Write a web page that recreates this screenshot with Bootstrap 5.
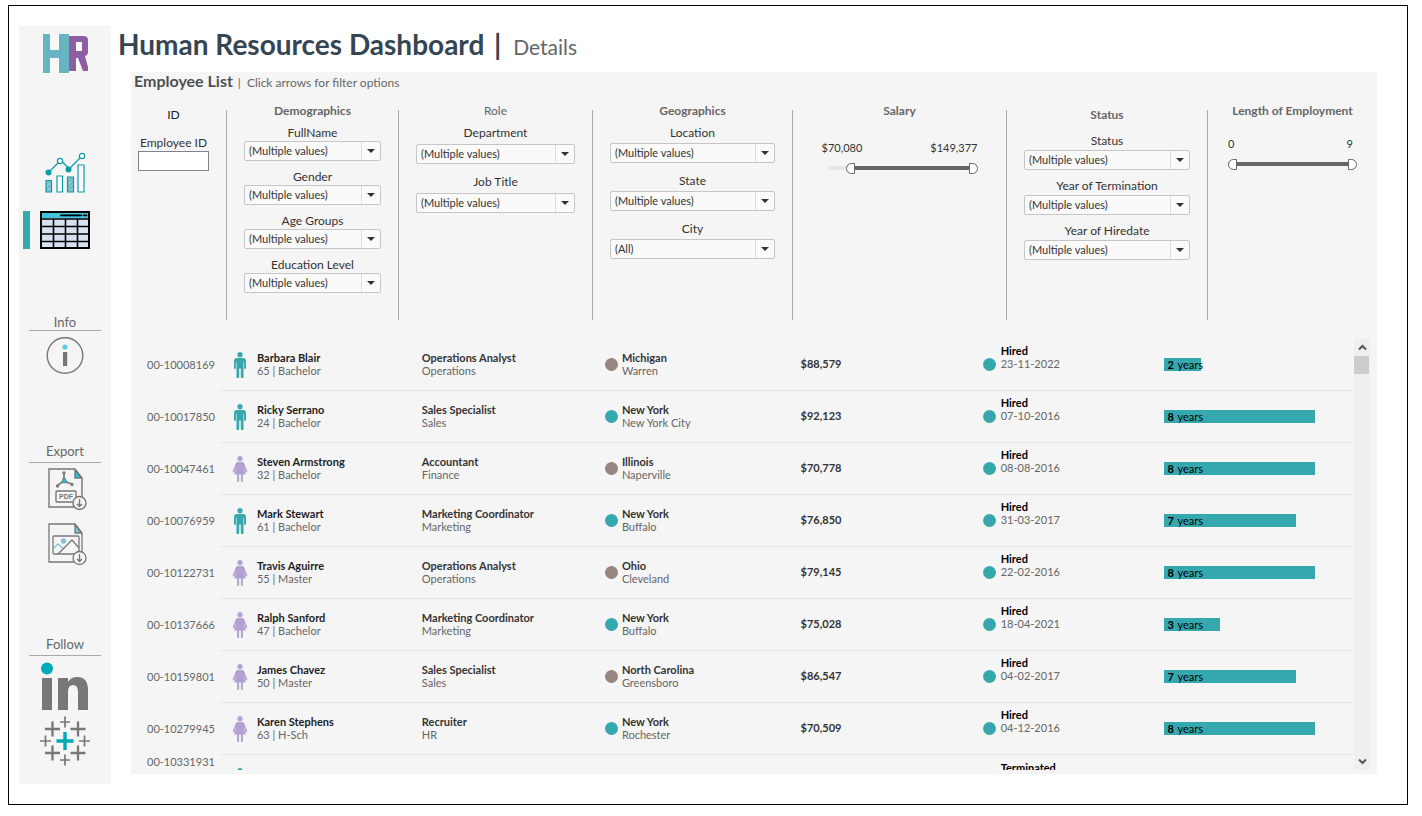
<!DOCTYPE html>
<html lang="en">
<head>
<meta charset="utf-8">
<meta name="viewport" content="width=device-width, initial-scale=1">
<title>Human Resources Dashboard | Details</title>
<link href="https://cdn.jsdelivr.net/npm/bootstrap@5.3.0/dist/css/bootstrap.min.css" rel="stylesheet">
<style>
:root{--teal:#35a8ae;--ink:#333;--mid:#666;--panel:#f5f5f5}
body{height:100vh;padding:5px 14px 11px 8px;font-family:"Trebuchet MS",Lato,"Open Sans",sans-serif;font-size:11px;line-height:13px;color:var(--ink)}
a{color:inherit;text-decoration:none}
.frame{border:1px solid #000;min-height:640px}
/* sidebar */
.side{width:92px;margin:20px 0 20px 10px;background:var(--panel);flex:none}
.side h2{font-size:13px;line-height:16px;font-weight:400;color:var(--mid);text-align:center;margin:0 10px;border-bottom:1px solid #aaa}
.side svg{display:block}
.brand{margin:7px 0 77px 22px}
.current{border-left:7px solid var(--teal);margin:17px 0 65px 4px;padding-left:10px}
.sec-info{height:129px}
.sec-info a{padding-top:6px}
.sec-export{height:193px}
.sec-export a{padding:4px 0 0 3px}
.sec-export a + a{padding-top:11px}
.sec-export h2,.sec-follow h2{padding-bottom:3px}
.sec-follow a{padding-top:5px}
/* heading */
.head-line{padding-top:20px;margin-bottom:10px}
.head-line h1{font-size:28px;line-height:36px;font-weight:700;color:#354552;margin:0}
.head-line span{font-size:21px;line-height:20px;font-weight:400;color:var(--mid)}
.head-line i{font-style:normal;line-height:20px;padding:0 5px 0 3px}
.board{background:var(--panel);margin:0 30px 30px 13px;min-height:0}
.list-title{font-size:16px;line-height:18px;font-weight:700;color:#4f4f4f;margin:0 0 12px;padding-left:3px}
.list-title small{font-size:12px;line-height:12px;font-weight:400;color:var(--mid)}
.list-title small i{font-style:normal;padding:0 3px 0 1px}
/* filters */
.filters{display:grid;grid-template-columns:95fr 172fr 194fr 200fr 214fr 201fr 170fr;margin-bottom:19px}
.fcol{min-height:218px;min-width:0;padding:0 17px 0 18px;display:flex;flex-direction:column;background:linear-gradient(#aaa,#aaa) 0 8px/1px 100% no-repeat}
.fcol:first-child{background:none;padding-left:7px}
.fcol h3{font-size:12px;line-height:18px;font-weight:700;color:var(--mid);text-align:center;margin:0 0 5px}
.fcol h3.plain{font-weight:400}
.fcol.low h3{padding-top:4px;margin-bottom:9px}
.fcol.low:first-child h3{margin-bottom:11px}
.fcol label{font-size:12px;line-height:16px;text-align:center;display:block}
.fcol .form-select{height:20px;padding:0 20px 0 4px;font-size:11px;line-height:16px;color:var(--ink);border:1px solid #c6c6c6;border-radius:2px;background-color:#fafafa;background-size:19px 18px;background-position:right 0 center;background-image:url("data:image/svg+xml,%3Csvg xmlns='http://www.w3.org/2000/svg' viewBox='0 0 19 18'%3E%3Cpath d='M.5 0v18' stroke='%23ddd'/%3E%3Cpath d='M6 7h8l-4 4z' fill='%23333'/%3E%3C/svg%3E");margin:var(--lab,0px) 0 var(--gap,8px)}
.fcol .form-control{height:20px;padding:0 4px;font-size:11px;border:1px solid #80838f;border-radius:0;background:#fff}
.role{--lab:3px;--gap:10px}.geo{--lab:2px;--gap:10px}.stat{--lab:1px;--gap:8px}
.span{width:156px;margin:15px auto 0}
.span label{font-size:11px}
.span.short{width:129px;margin-top:11px}
.slide{position:relative;height:13px;margin-top:6px}
.rail{height:4px;background:#e6e6e6}
.rail div{height:4px;background:var(--mid)}
.salary .slide{margin-left:7px}
.slide .rail{position:absolute;left:0;right:4px;top:4px}
.slide input{position:absolute;left:0;top:0;width:100%;height:13px;margin:0;appearance:none;background:none;pointer-events:none}
.slide input::-webkit-slider-thumb{appearance:none;pointer-events:auto;width:9px;height:11px;border:1px solid var(--mid);background:#fff;border-radius:0 6px 6px 0}
.slide input.from::-webkit-slider-thumb{border-radius:6px 0 0 6px}
/* list */
.list-box{min-height:0;padding:0 7px 4px 0}
.list-view{overflow:hidden;min-width:0}
.people{table-layout:fixed;width:100%;border-collapse:separate;border-spacing:0}
.people td{height:52px;padding:0;border-bottom:1px solid #e6e6e6;vertical-align:middle;white-space:nowrap;color:var(--mid)}
.people td:first-child{border:0;padding:0 0 2px 16px}
.people tr.last td:first-child{vertical-align:top}
.people tr.last td{border:0}
.people strong{display:block;color:var(--ink)}
.people .pair{padding-bottom:2px}
.people .who strong{color:#1e1e1e}
.people .when strong{color:#000}
.people .when .pair{padding-bottom:15px}
.people .figure-icon{width:16px;height:26px;margin:0 9px 0 13px;flex:none}
.spot{width:13px;height:13px;border-radius:50%;background:#978580;margin-right:4px;flex:none}
.spot.on{background:var(--teal)}
.geo-cell .spot{margin-left:1px}
.when .spot{margin-right:5px}
.years{height:13px;padding-left:4px;background:var(--teal);color:#000;line-height:13px}
.years b{margin-right:1px}
.bar-track{width:80%}
.scroller{width:16px;margin-left:1px;background:#efefef;flex:none}
.scroller button{border:0;background:none;padding:0;height:17px;line-height:0}
.scroller i{height:18px;width:15px;background:#cdcdcd}
</style>
</head>
<body>
<svg width="0" height="0" class="position-absolute" aria-hidden="true">
  <symbol id="man" viewBox="0 0 16 26"><circle cx="8" cy="2.700" r="2.600"/><path d="M5 6h6a3 3 0 0 1 3 3v7.200a1 1 0 0 1-1.900 0V9.800h-.6V25a1.200 1.200 0 0 1-2.700 0v-8.500h-1.600V25a1.200 1.200 0 0 1-2.700 0V9.800h-.6v6.400a1 1 0 0 1-1.900 0V9a3 3 0 0 1 3-3z"/></symbol>
  <symbol id="woman" viewBox="0 0 16 26"><circle cx="8" cy="2.700" r="2.600"/><path d="M5.800 6h4.400q1.600 0 2.200 1.700l2.700 7.300q.4 1.200-.4 1.500t-1.200-.7L11.600 10.500l2.200 8h-2.900V25.200a1 1 0 0 1-2 0v-6.700H7.100v6.700a1 1 0 0 1-2 0v-6.700H2.200l2.200-8-1.900 5.300q-.4 1-1.200.7t-.4-1.500l2.700-7.300Q4.200 6 5.800 6z"/></symbol>
</svg>
<div class="frame h-100 d-flex">
  <nav class="side" aria-label="Dashboard pages">
    <svg class="brand" width="48" height="42" viewBox="0 0 48 42" role="img" aria-label="HR">
      <circle cx="24" cy="21" r="19.500" fill="#f8f8f8" stroke="#fff"/>
      <path d="M29 4h14q5 0 5 4v12q0 3-3 4l3 11v4h-5l-5-13h-2v13h-7zM36 10v9h6v-9z" fill="#8e5ea2" fill-rule="evenodd" transform="translate(-1 -1)"/>
      <path d="M2 1h7v16h9V1h10v39H18V25H9v15H2z" fill="#67b5c3"/>
    </svg>
    <a href="#" class="d-block" aria-label="Charts">
      <svg class="mx-auto" width="42" height="42" viewBox="0 0 42 42" fill="none" stroke="#0a9bab" stroke-width="1.200">
        <path d="M6 19 15 10M18.500 10l6 6M26.500 15.500 37 5"/>
        <circle cx="4.500" cy="20.500" r="2.400" fill="#0a9bab"/><circle cx="16" cy="9" r="2.600" fill="#fff"/><circle cx="24.500" cy="17.500" r="2.400" fill="#0a9bab"/><circle cx="38" cy="4" r="2.600" fill="#fff"/>
        <path d="M2 28.500h5.500V40H2zM23.500 25h6v15h-6z" fill="#8cc5cc"/><path d="M13 24h5.500v16H13zM34 13h6v27h-6z" fill="#fafafa"/>
        <path d="m2 33 4-4m-4 9 5-5m17-3 4-4m-4 9 5-5m-5 9 5-5" stroke-width=".5"/>
      </svg>
    </a>
    <a href="#" class="current d-block" aria-current="page" aria-label="Details">
      <svg width="50" height="38" viewBox="0 0 50 38"><path d="M1 1h48v36H1z" fill="#d6e1f2" stroke="#000" stroke-width="2"/><path d="M2 2h46v5H2z" fill="#45c3dd"/><path d="M1 8h48M1 15.500h48M1 23h48M1 30.500h48M13.500 8v29M25.500 8v29M37.500 8v29" stroke="#000" stroke-width="1.600"/><path d="M21 4.300h20M43.500 4.300h3" stroke="#000" stroke-width="1.800" stroke-linecap="round"/></svg>
    </a>
    <section class="sec-info"><h2>Info</h2>
      <a href="#" class="d-block" aria-label="About this dashboard"><svg class="mx-auto" width="38" height="38" viewBox="0 0 38 38"><circle cx="19" cy="18.500" r="17.800" fill="none" stroke="#777" stroke-width="1.400"/><circle cx="19" cy="10" r="2.600" fill="#5cc9e6"/><path d="M17 15h4.200v14H17z" fill="#777"/></svg></a>
    </section>
    <section class="sec-export"><h2>Export</h2>
      <a href="#" class="d-block" aria-label="Export PDF"><svg class="mx-auto" width="40" height="44" viewBox="0 0 40 44" fill="none" stroke="#777" stroke-width="1.400">
        <path d="M28 2H2v38h25M28 2l7 9v23"/><path d="M28 2.500v8.500h6.500z" fill="#1cc6d8"/>
        <path d="M17 6v4.500l-2.300 5L10.500 18.500M17 10.500l2.500 4.500 5 2M14.700 15.500h5.500" stroke-width="1.600"/><circle cx="17" cy="6" r="1"/><circle cx="10.500" cy="19" r="1"/><circle cx="25" cy="17.500" r="1"/><path d="m17 11.500-2.200 4h4.800z" fill="#1cc6d8" stroke="none"/>
        <rect x="9" y="24" width="20" height="11" rx="1"/><text x="12" y="32" font-family="Liberation Sans" font-size="7" font-weight="700" fill="#777" stroke="none">PDF</text>
        <circle cx="32.500" cy="36" r="6.500" fill="#f5f5f5"/><path d="M32.500 32v7.500m-2.500-2.500 2.500 2.500 2.500-2.500"/></svg></a>
      <a href="#" class="d-block" aria-label="Export image"><svg class="mx-auto" width="40" height="44" viewBox="0 0 40 44" fill="none" stroke="#777" stroke-width="1.300">
        <path d="M28 2H2v38h25M28 2l7 9v23"/><path d="M28 2.500v8.500h6.500z" fill="#7fc6d4"/>
        <rect x="6" y="14" width="26" height="18" rx="1"/><path d="M6.500 26.500 11 22l5 4.500" stroke="#7fc6d4"/><path d="M11 32 25 18l7 8"/><circle cx="16.500" cy="19" r="2.700" fill="#7fc6d4" stroke="none"/>
        <circle cx="32.500" cy="36" r="6.500" fill="#f5f5f5"/><path d="M32.500 32v7.500m-2.500-2.500 2.500 2.500 2.500-2.500"/></svg></a>
    </section>
    <section class="sec-follow"><h2>Follow</h2>
      <a href="#" class="d-block" aria-label="LinkedIn"><svg class="mx-auto" width="50" height="50" viewBox="0 0 50 50"><circle cx="7" cy="7.500" r="6" fill="#00a9b8"/><path d="M2 17h10v32H2zM18 17h10v4q3-5 9-5 11 0 11 13v20H38V31q0-7-5-7t-5 7v18H18z" fill="#777"/></svg></a>
      <a href="#" class="d-block" aria-label="Tableau Public"><svg class="mx-auto" width="50" height="50" viewBox="0 0 50 50" fill="none" stroke="#777" stroke-width="2"><path d="M25 16v18M16.500 25h17" stroke="#00a9b8" stroke-width="3.400"/><path d="M12.500 5.500v15M5 13h15M38 5.500v15M30.500 13h15M12.500 29.500v15M5 37h15M38 29.500v15M30.500 37h15" stroke-width="2.300"/><path d="M25 .5v11M20 6h10M25 38.500v11M20 44h10M5.500 19.500v11M0 25h11M44.500 19.500v11M39 25h11" stroke-width="1.700"/></svg></a>
    </section>
  </nav>
  <main class="flex-grow-1 d-flex flex-column" style="min-width:0;padding-left:7px">
    <header class="head-line"><h1>Human Resources Dashboard <i>|</i> <span>Details</span></h1></header>
    <section class="board flex-grow-1 d-flex flex-column">
      <h2 class="list-title">Employee List <small><i>|</i> Click arrows for filter options</small></h2>
      <form class="filters">
        <div class="fcol low"><h3 class="plain text-body">ID</h3><label for="eid">Employee ID</label><input id="eid" class="form-control" type="text"></div>
        <div class="fcol"><h3>Demographics</h3>
          <label for="f1">FullName</label><select id="f1" class="form-select"><option>(Multiple values)</option></select>
          <label for="f2">Gender</label><select id="f2" class="form-select"><option>(Multiple values)</option></select>
          <label for="f3">Age Groups</label><select id="f3" class="form-select"><option>(Multiple values)</option></select>
          <label for="f4">Education Level</label><select id="f4" class="form-select"><option>(Multiple values)</option></select></div>
        <div class="fcol role"><h3 class="plain">Role</h3>
          <label for="f5">Department</label><select id="f5" class="form-select"><option>(Multiple values)</option></select>
          <label for="f6">Job Title</label><select id="f6" class="form-select"><option>(Multiple values)</option></select></div>
        <div class="fcol geo"><h3>Geographics</h3>
          <label for="f7">Location</label><select id="f7" class="form-select"><option>(Multiple values)</option></select>
          <label for="f8">State</label><select id="f8" class="form-select"><option>(Multiple values)</option></select>
          <label for="f9">City</label><select id="f9" class="form-select"><option>(All)</option></select></div>
        <div class="fcol salary"><h3>Salary</h3>
          <div class="span"><div class="d-flex justify-content-between"><label for="s1">$70,080</label><label for="s2">$149,377</label></div>
            <div class="slide"><div class="rail"><div style="margin-left:15%"></div></div><input id="s1" class="from" type="range" min="59010" max="149377" value="70080"><input id="s2" type="range" min="59010" max="149377" value="149377"></div></div></div>
        <div class="fcol low stat"><h3>Status</h3>
          <label for="f10">Status</label><select id="f10" class="form-select"><option>(Multiple values)</option></select>
          <label for="f11">Year of Termination</label><select id="f11" class="form-select"><option>(Multiple values)</option></select>
          <label for="f12">Year of Hiredate</label><select id="f12" class="form-select"><option>(Multiple values)</option></select></div>
        <div class="fcol"><h3 class="text-nowrap">Length of Employment</h3>
          <div class="span short"><div class="d-flex justify-content-between pe-1"><label for="l1">0</label><label for="l2">9</label></div>
            <div class="slide"><div class="rail"><div></div></div><input id="l1" class="from" type="range" min="0" max="9" value="0"><input id="l2" type="range" min="0" max="9" value="9"></div></div></div>
      </form>
      <div class="list-box d-flex flex-grow-1">
        <div class="list-view flex-grow-1">
          <table class="people">
            <colgroup><col style="width:7.2%"><col style="width:16.6%"><col style="width:14.9%"><col style="width:16.1%"><col style="width:14.9%"><col style="width:14.8%"><col style="width:15.5%"></colgroup>
            <tbody id="rows"></tbody>
          </table>
        </div>
        <div class="scroller d-flex flex-column">
          <button type="button" aria-label="Scroll up"><svg width="9" height="7" viewBox="0 0 9 7" fill="none" stroke="#555" stroke-width="2"><path d="m1 5.500 3.500-3.500L8 5.500"/></svg></button>
          <i></i>
          <button type="button" class="mt-auto" aria-label="Scroll down"><svg width="9" height="7" viewBox="0 0 9 7" fill="none" stroke="#555" stroke-width="2"><path d="m1 1.500 3.500 3.500L8 1.500"/></svg></button>
        </div>
      </div>
    </section>
  </main>
</div>
<script src="https://cdn.jsdelivr.net/npm/bootstrap@5.3.0/dist/js/bootstrap.bundle.min.js"></script>
<script>
// id, icon, name, age | education, job, department, state, city, head-office flag, salary, hire date, years
const people = [
  ["00-10008169","man","Barbara Blair","65 | Bachelor","Operations Analyst","Operations","Michigan","Warren",0,"$88,579","23-11-2022",2],
  ["00-10017850","man","Ricky Serrano","24 | Bachelor","Sales Specialist","Sales","New York","New York City",1,"$92,123","07-10-2016",8],
  ["00-10047461","woman","Steven Armstrong","32 | Bachelor","Accountant","Finance","Illinois","Naperville",0,"$70,778","08-08-2016",8],
  ["00-10076959","man","Mark Stewart","61 | Bachelor","Marketing Coordinator","Marketing","New York","Buffalo",1,"$76,850","31-03-2017",7],
  ["00-10122731","woman","Travis Aguirre","55 | Master","Operations Analyst","Operations","Ohio","Cleveland",0,"$79,145","22-02-2016",8],
  ["00-10137666","woman","Ralph Sanford","47 | Bachelor","Marketing Coordinator","Marketing","New York","Buffalo",1,"$75,028","18-04-2021",3],
  ["00-10159801","woman","James Chavez","50 | Master","Sales Specialist","Sales","North Carolina","Greensboro",0,"$86,547","04-02-2017",7],
  ["00-10279945","woman","Karen Stephens","63 | H-Sch","Recruiter","HR","New York","Rochester",1,"$70,509","04-12-2016",8]
];
const tint = { man: "#35a8ae", woman: "#b3a1d3" };
const icon = k => `<svg class="figure-icon" fill="${tint[k]}"><use href="#${k}"/></svg>`;
document.getElementById("rows").innerHTML = people.map(p => `<tr>
  <td>${p[0]}</td>
  <td><div class="d-flex align-items-center">${icon(p[1])}<div class="who pair"><strong>${p[2]}</strong>${p[3]}</div></div></td>
  <td><div class="pair"><strong>${p[4]}</strong>${p[5]}</div></td>
  <td class="geo-cell"><div class="d-flex align-items-center"><i class="spot ${p[8] ? "on" : ""}"></i><div class="pair"><strong>${p[6]}</strong>${p[7]}</div></div></td>
  <td><div class="pair"><strong>${p[9]}</strong></div></td>
  <td class="when"><div class="d-flex align-items-center"><i class="spot on"></i><div class="pair"><strong>Hired</strong>${p[10]}</div></div></td>
  <td><div class="bar-track"><div class="years" style="width:${p[11] * 12.5}%"><b>${p[11]}</b> years</div></div></td>
</tr>`).join("") + `<tr class="last"><td>00-10331931</td><td><div class="d-flex">${icon("man")}</div></td><td></td><td></td><td></td>
  <td class="when"><div class="d-flex align-items-center"><i class="spot"></i><div class="pair"><strong>Terminated</strong>&nbsp;</div></div></td><td></td></tr>`;
</script>
</body>
</html>
